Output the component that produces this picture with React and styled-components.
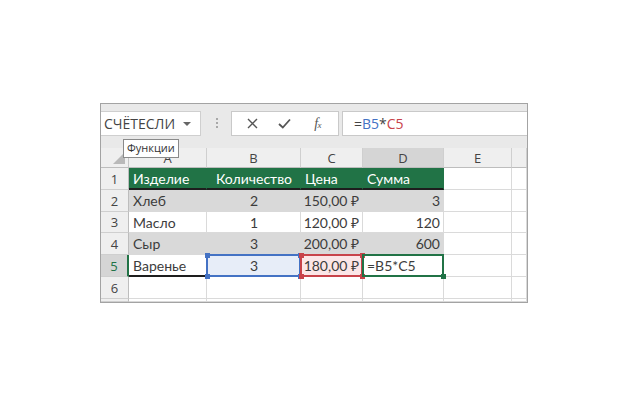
import React from 'react';
import styled, { createGlobalStyle, css } from 'styled-components';

const GlobalStyle = createGlobalStyle`
  body {
    margin: 0;
    background: #fff;
    font-family: "Open Sans", "Noto Sans", Arial, sans-serif;
  }
`;

const GREEN = '#217346';
const BLUE = '#4472c4';
const RED = '#c8434a';

const Page = styled.div`
  padding: 103px 0 0 100px;
`;

const Frame = styled.div`
  position: relative;
  width: 428px;
  height: 200px;
  box-sizing: border-box;
  border: 1px solid #a3a3a3;
  background: #e9e9e9;
  overflow: hidden;
  display: flex;
  flex-direction: column;
`;

const Toolbar = styled.div`
  display: flex;
  align-items: flex-start;
  height: 44px;
  padding-top: 7px;
  box-sizing: border-box;
`;

const NameBox = styled.div`
  width: 100px;
  height: 25px;
  box-sizing: border-box;
  background: #fff;
  border: 1px solid #cfcfcf;
  border-left: none;
  display: flex;
  align-items: center;
  justify-content: space-between;
  padding: 0 9px 0 3px;
  font-size: 14px;
  color: #444;
`;

const Arrow = styled.span`
  width: 0;
  height: 0;
  border-left: 4px solid transparent;
  border-right: 4px solid transparent;
  border-top: 4px solid #666;
`;

const Grip = styled.div`
  margin: 6px 0 0 15px;
  width: 2px;
  height: 12px;
  background: radial-gradient(circle, #a8a8a8 0.8px, transparent 1.2px) 0 0 / 2px 4px repeat-y;
`;

const Buttons = styled.div`
  margin-left: 13px;
  width: 108px;
  height: 25px;
  box-sizing: border-box;
  background: #fff;
  border: 1px solid #c9c9c9;
  display: flex;
  align-items: center;
  justify-content: space-around;
  padding: 0 4px;
`;

const IconSlot = styled.span`
  width: 24px;
  display: flex;
  justify-content: center;
  align-items: center;
  color: #555;
`;

const Fx = styled.span`
  font-family: "Liberation Serif", "DejaVu Serif", serif;
  font-style: italic;
  font-size: 14px;
  color: #555;
  letter-spacing: -0.5px;
  sub {
    font-size: 9px;
    vertical-align: baseline;
  }
`;

const Formula = styled.div`
  margin-left: 3px;
  flex: 1;
  height: 25px;
  box-sizing: border-box;
  background: #fff;
  border: 1px solid #c9c9c9;
  border-right: none;
  display: flex;
  align-items: center;
  padding-left: 11px;
  font-size: 14px;
  color: #444;
`;

const Ref = styled.span`
  color: ${(p) => p.$color};
`;

const Sheet = styled.div`
  flex: 1;
  display: grid;
  grid-template-columns: 28px 78px 94px 62px 81px 68px 1fr;
  grid-template-rows: 20px 22px 22px 21px 22px 22px 22px 1fr;
  background: #fff;
  font-size: 13px;
`;

const Corner = styled.div`
  position: relative;
  background: #efefef;
  border-right: 1px solid #c6c6c6;
  border-bottom: 1px solid #bdbdbd;
  &::after {
    content: '';
    position: absolute;
    right: 3px;
    bottom: 3px;
    border-left: 12px solid transparent;
    border-bottom: 12px solid #b9b9b9;
  }
`;

const ColHead = styled.div`
  display: flex;
  align-items: center;
  justify-content: center;
  background: ${(p) => (p.$active ? '#d5d5d5' : '#efefef')};
  border-right: 1px solid #cfcfcf;
  border-bottom: 1px solid #bdbdbd;
  color: #444;
`;

const RowHead = styled.div`
  display: flex;
  align-items: center;
  justify-content: center;
  background: ${(p) => (p.$active ? '#d5d5d5' : '#efefef')};
  border-bottom: 1px solid #cfcfcf;
  border-right: ${(p) => (p.$active ? `2px solid ${GREEN}` : '1px solid #bdbdbd')};
  color: ${(p) => (p.$active ? GREEN : '#444')};
`;

const Cell = styled.div`
  position: relative;
  display: flex;
  align-items: center;
  justify-content: ${(p) => p.$align || 'flex-start'};
  padding: 0 3px 0 4px;
  box-sizing: border-box;
  font-family: Lato, "Open Sans", sans-serif;
  font-size: 14px;
  background: ${(p) => p.$bg || '#fff'};
  color: ${(p) => p.$color || '#3c3c3c'};
  border-right: 1px solid ${(p) => p.$line || '#dadada'};
  border-bottom: ${(p) => p.$under ? '2px solid #1e1e1e' : `1px solid ${p.$line || '#dadada'}`};
  white-space: nowrap;
`;

const Outline = styled.div`
  position: absolute;
  z-index: 2;
  top: -1px;
  left: -1px;
  right: -1px;
  bottom: -1px;
  border: 2px solid ${(p) => p.$color};
  pointer-events: none;
`;

const Handle = styled.span`
  position: absolute;
  width: 5px;
  height: 5px;
  background: ${(p) => p.$color};
  ${(p) => (p.$top ? css`top: -3.5px;` : css`bottom: -3.5px;`)}
  ${(p) => (p.$left ? css`left: -3.5px;` : css`right: -3.5px;`)}
`;

const Tooltip = styled.div`
  position: absolute;
  z-index: 3;
  left: 22px;
  top: 35px;
  padding: 1px 3px 2px;
  background: #fff;
  border: 1px solid #8a8a8a;
  font-size: 11px;
  color: #333;
  line-height: 14px;
`;

const Selection = ({ color, handles }) => (
  <Outline $color={color}>
    {handles === 'all' && (
      <>
        <Handle $color={color} $top $left />
        <Handle $color={color} $top />
        <Handle $color={color} $left />
      </>
    )}
    <Handle $color={color} />
  </Outline>
);

const CloseIcon = () => (
  <svg width="11" height="11" viewBox="0 0 11 11">
    <path d="M1 1 L10 10 M10 1 L1 10" stroke="#555" strokeWidth="1.4" fill="none" />
  </svg>
);

const CheckIcon = () => (
  <svg width="13" height="11" viewBox="0 0 13 11">
    <path d="M1 6 L4.8 9.5 L12 1.5" stroke="#555" strokeWidth="1.8" fill="none" />
  </svg>
);

const GRAY = '#d9d9d9';

const rows = [
  { n: 2, bg: GRAY, cells: ['Хлеб', '2', '150,00 ₽', '3'] },
  { n: 3, bg: '#fff', cells: ['Масло', '1', '120,00 ₽', '120'] },
  { n: 4, bg: GRAY, cells: ['Сыр', '3', '200,00 ₽', '600'] },
];

const aligns = ['flex-start', 'center', 'flex-end', 'flex-end'];
const headAligns = ['flex-start', 'center', 'flex-start', 'flex-start'];

export default function App() {
  return (
    <Page>
      <GlobalStyle />
      <Frame>
        <Toolbar>
          <NameBox>
            СЧЁТЕСЛИ
            <Arrow />
          </NameBox>
          <Grip />
          <Buttons>
            <IconSlot><CloseIcon /></IconSlot>
            <IconSlot><CheckIcon /></IconSlot>
            <IconSlot><Fx>f<sub>x</sub></Fx></IconSlot>
          </Buttons>
          <Formula>
            =<Ref $color={BLUE}>B5</Ref>*<Ref $color={RED}>C5</Ref>
          </Formula>
        </Toolbar>

        <Sheet>
          <Corner />
          {['A', 'B', 'C', 'D', 'E', ''].map((c) => (
            <ColHead key={c || 'F'} $active={c === 'D'}>{c}</ColHead>
          ))}

          <RowHead>1</RowHead>
          {['Изделие', 'Количество', 'Цена', 'Сумма'].map((t, i) => (
            <Cell key={t} $bg={GREEN} $line={GREEN} $color="#fff" $align={headAligns[i]} $under>
              {t}
            </Cell>
          ))}
          <Cell />
          <Cell />

          {rows.map((r) => (
            <React.Fragment key={r.n}>
              <RowHead>{r.n}</RowHead>
              {r.cells.map((t, i) => (
                <Cell
                  key={i}
                  $bg={r.bg}
                  $line={r.bg === GRAY ? GRAY : undefined}
                  $align={aligns[i]}
                >
                  {t}
                </Cell>
              ))}
              <Cell />
              <Cell />
            </React.Fragment>
          ))}

          <RowHead $active>5</RowHead>
          <Cell $under>Варенье</Cell>
          <Cell $bg="#e7edf8" $align="center">
            3
            <Selection color={BLUE} handles="all" />
          </Cell>
          <Cell $bg="#fbe6e7" $align="flex-end">
            180,00 ₽
            <Selection color={RED} handles="all" />
          </Cell>
          <Cell>
            =B5*C5
            <Selection color={GREEN} />
          </Cell>
          <Cell />
          <Cell />

          <RowHead>6</RowHead>
          {[0, 1, 2, 3, 4, 5].map((i) => <Cell key={i} />)}

          <RowHead />
          {[0, 1, 2, 3, 4, 5].map((i) => <Cell key={i} />)}
        </Sheet>

        <Tooltip>Функции</Tooltip>
      </Frame>
    </Page>
  );
}
